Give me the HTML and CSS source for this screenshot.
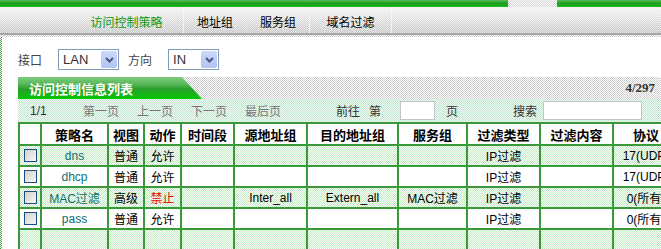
FILE: index.html
```html
<!DOCTYPE html>
<html lang="zh-CN">
<head>
    <meta charset="UTF-8">
    <title>访问控制策略</title>
    <link rel="stylesheet" href="styles.css">
</head>
<body>
    <!-- top strip -->
    <div class="topbar">
        <span class="topbar-green"></span>
        <span class="topbar-gap"></span>
        <span class="topbar-green topbar-rest"></span>
    </div>

    <!-- tabs -->
    <div class="tabs">
        <a class="tab tab-policy tab-active">访问控制策略</a>
        <a class="tab tab-group">地址组</a>
        <a class="tab tab-group">服务组</a>
        <a class="tab tab-domain">域名过滤</a>
    </div>
    <div class="tabs-shadow"></div>

    <div class="main">
        <div class="filter">
            <span class="filter-label">接口</span>
            <span class="select select-lan">
                <span class="select-value">LAN</span>
                <span class="select-btn"><svg width="9" height="6" viewBox="0 0 9 6"><path d="M1 1 L4.5 4.5 L8 1" fill="none" stroke="#44577f" stroke-width="2"/></svg></span>
            </span>
            <span class="filter-label">方向</span>
            <span class="select select-dir">
                <span class="select-value">IN</span>
                <span class="select-btn"><svg width="9" height="6" viewBox="0 0 9 6"><path d="M1 1 L4.5 4.5 L8 1" fill="none" stroke="#44577f" stroke-width="2"/></svg></span>
            </span>
        </div>

        <div class="list-head">
            <div class="list-title">访问控制信息列表</div>
            <div class="list-count">4/297</div>
        </div>

        <div class="pager">
            <span class="pager-total">1/1</span>
            <a class="pager-link">第一页</a>
            <a class="pager-link">上一页</a>
            <a class="pager-link">下一页</a>
            <a class="pager-link pager-last">最后页</a>
            <span class="pager-text">前往</span>
            <span class="pager-text pager-di">第</span>
            <input class="pager-input page-no" type="text">
            <span class="pager-text pager-ye">页</span>
            <span class="pager-text">搜索</span>
            <input class="pager-input search" type="text">
        </div>

        <table class="rules">
            <tr>
                <th class="c-check"></th>
                <th class="c-name">策略名</th>
                <th class="c-view">视图</th>
                <th class="c-act">动作</th>
                <th class="c-time">时间段</th>
                <th class="c-src">源地址组</th>
                <th class="c-dst">目的地址组</th>
                <th class="c-svc">服务组</th>
                <th class="c-type">过滤类型</th>
                <th class="c-content">过滤内容</th>
                <th class="c-proto">协议</th>
            </tr>
            <tr class="row-green">
                <td><input class="cb" type="checkbox"></td>
                <td class="name">dns</td>
                <td>普通</td>
                <td>允许</td>
                <td></td><td></td><td></td><td></td>
                <td>IP过滤</td>
                <td></td>
                <td>17(UDP)</td>
            </tr>
            <tr>
                <td><input class="cb" type="checkbox"></td>
                <td class="name">dhcp</td>
                <td>普通</td>
                <td>允许</td>
                <td></td><td></td><td></td><td></td>
                <td>IP过滤</td>
                <td></td>
                <td>17(UDP)</td>
            </tr>
            <tr class="row-green">
                <td><input class="cb" type="checkbox"></td>
                <td class="name">MAC过滤</td>
                <td>高级</td>
                <td class="deny">禁止</td>
                <td></td>
                <td>Inter_all</td>
                <td>Extern_all</td>
                <td>MAC过滤</td>
                <td>IP过滤</td>
                <td></td>
                <td>0(所有)</td>
            </tr>
            <tr>
                <td><input class="cb" type="checkbox"></td>
                <td class="name">pass</td>
                <td>普通</td>
                <td>允许</td>
                <td></td><td></td><td></td><td></td>
                <td>IP过滤</td>
                <td></td>
                <td>0(所有)</td>
            </tr>
            <tr class="row-green row-empty">
                <td></td><td></td><td></td><td></td><td></td><td></td>
                <td></td><td></td><td></td><td></td><td></td>
            </tr>
        </table>
    </div>
</body>
</html>
```

FILE: styles.css
```css
html, body {
    margin: 0;
    overflow: hidden;
}

body {
    width: 661px;
    height: 249px;
    background-color: #fff;
    font-family: "Liberation Sans", "Noto Sans CJK SC", sans-serif;
    font-size: 12px;
    color: #000;
}

/* top strip */
.topbar {
    display: flex;
    height: 7px;
}

.topbar-green {
    width: 508px;
    background-image: linear-gradient(#5cbf5c, #1f9f1f 45%, #18b818);
}

.topbar-gap {
    width: 49px;
    background: repeating-conic-gradient(#d4d4d4 0 25%, #fff 0 50%) 0 0 / 2px 2px;
}

.topbar-rest {
    flex: 1;
}

/* tabs */
.tabs {
    display: flex;
    height: 26px;
    padding-left: 70px;
    background-image:
        repeating-conic-gradient(rgba(255, 255, 255, 0.6) 0 25%, transparent 0 50%),
        linear-gradient(#f2f2f2, #c2c2c2);
    background-size: 2px 2px, 100% 100%;
    border-bottom: 2px solid #a6a6a6;
}

.tab {
    display: flex;
    align-items: center;
    justify-content: center;
    padding-top: 2px;
    font-family: "Noto Sans CJK SC", sans-serif;
    font-size: 12px;
    color: #000;
    border-right: 1px dotted #f6f6f6;
    cursor: pointer;
}

.tab-active {
    color: #0f9a0f;
}

.tab-policy { width: 113px; }
.tab-group { width: 62px; }
.tab-domain { width: 81px; }

.tabs-shadow {
    height: 2px;
    background: repeating-conic-gradient(#cfcfcf 0 25%, #fff 0 50%) 0 0 / 2px 2px;
}

/* main area */
.main {
    height: 212px;
    padding-left: 18px;
    background: repeating-conic-gradient(#2fa52f 0 25%, #fff 0 50%) left top / 2px 2px repeat-y;
}

.filter {
    display: flex;
    align-items: center;
    height: 21px;
    padding-top: 12px;
}

.filter-label {
    margin-right: 16px;
    font-family: "Noto Sans CJK SC", sans-serif;
    color: #444;
}

.select {
    display: flex;
    box-sizing: border-box;
    height: 21px;
    margin-right: 9px;
    border: 1px solid #7f9db9;
    background-color: #fff;
}

.select-lan { width: 61px; }
.select-dir { width: 51px; }

.select-value {
    flex: 1;
    padding-left: 4px;
    font-size: 13px;
    line-height: 19px;
    color: #333;
}

.select-btn {
    display: flex;
    align-items: center;
    justify-content: center;
    width: 16px;
    margin: 1px;
    border-radius: 2px;
    background-image: linear-gradient(#cbd8fb, #b2c4f4);
}

/* list header */
.list-head {
    display: flex;
    justify-content: space-between;
    width: 643px;
    height: 22px;
    margin-top: 7px;
    background: repeating-conic-gradient(#cdcdcd 0 25%, #fff 0 50%) 0 0 / 2px 2px;
}

.list-title {
    display: flex;
    align-items: center;
    box-sizing: border-box;
    width: 184px;
    padding-left: 11px;
    font-family: "Noto Sans CJK SC", sans-serif;
    font-size: 13px;
    font-weight: bold;
    color: #fff;
    background-image: linear-gradient(#7cc97c, #5cba5c 30%, #2a9f2a 55%, #17b317 78%, #02c802);
    clip-path: polygon(0 0, 164px 0, 184px 100%, 0 100%);
}

.list-count {
    align-self: center;
    padding-right: 6px;
    font-family: "Liberation Serif", serif;
    font-size: 13px;
    font-weight: bold;
    color: #333;
}

/* pager */
.pager {
    display: flex;
    align-items: center;
    width: 660px;
    height: 23px;
    padding-left: 12px;
    background: repeating-conic-gradient(#bfe5cf 0 25%, #f3fbf6 0 50%) 0 0 / 2px 2px;
    font-family: "Liberation Sans", "Noto Sans CJK SC", sans-serif;
    color: #333;
}

.pager-total {
    width: 53px;
}

.pager-link {
    width: 54px;
    color: #777;
    cursor: pointer;
}

.pager-last {
    margin-right: 37px;
}

.pager-di {
    margin-left: 9px;
}

.pager-input {
    box-sizing: border-box;
    height: 19px;
    padding: 0;
    border: 1px solid #c4c4c4;
    background-color: #fff;
}

.page-no {
    width: 35px;
    margin-left: 19px;
}

.pager-ye {
    margin-left: 11px;
    margin-right: 55px;
}

.search {
    width: 99px;
    margin-left: 6px;
}

/* table */
.rules {
    width: 660px;
    table-layout: fixed;
    border-collapse: separate;
    border-spacing: 0;
    border-top: 2px solid #389a38;
    border-left: 2px solid #389a38;
}

.rules th,
.rules td {
    box-sizing: border-box;
    padding: 0;
    border-right: 2px solid #389a38;
    border-bottom: 2px solid #389a38;
    text-align: center;
    white-space: nowrap;
    overflow: hidden;
}

.rules th {
    height: 22px;
    font-family: "Noto Sans CJK SC", sans-serif;
    font-size: 13px;
    font-weight: bold;
    background-color: #fff;
}

.rules td {
    height: 21px;
}

.c-check { width: 22px; }
.c-name { width: 67px; }
.c-view { width: 36px; }
.c-act { width: 37px; }
.c-time { width: 53px; }
.c-src { width: 73px; }
.c-dst { width: 91px; }
.c-svc { width: 69px; }
.c-type { width: 73px; }
.c-content { width: 73px; }
.c-proto { width: 66px; }

.row-green td {
    background: repeating-conic-gradient(#c2e9c2 0 25%, #fbfffb 0 50%) 0 0 / 2px 2px;
}

.row-empty td {
    height: 24px;
}

.name {
    color: #0b6f6f;
}

.deny {
    color: #f00000;
}

.cb {
    appearance: none;
    display: block;
    width: 13px;
    height: 13px;
    margin: 0 auto;
    border: 1px solid #1d4f7e;
    background-image: linear-gradient(135deg, #d2d2cc, #f7f7f4);
}
```
